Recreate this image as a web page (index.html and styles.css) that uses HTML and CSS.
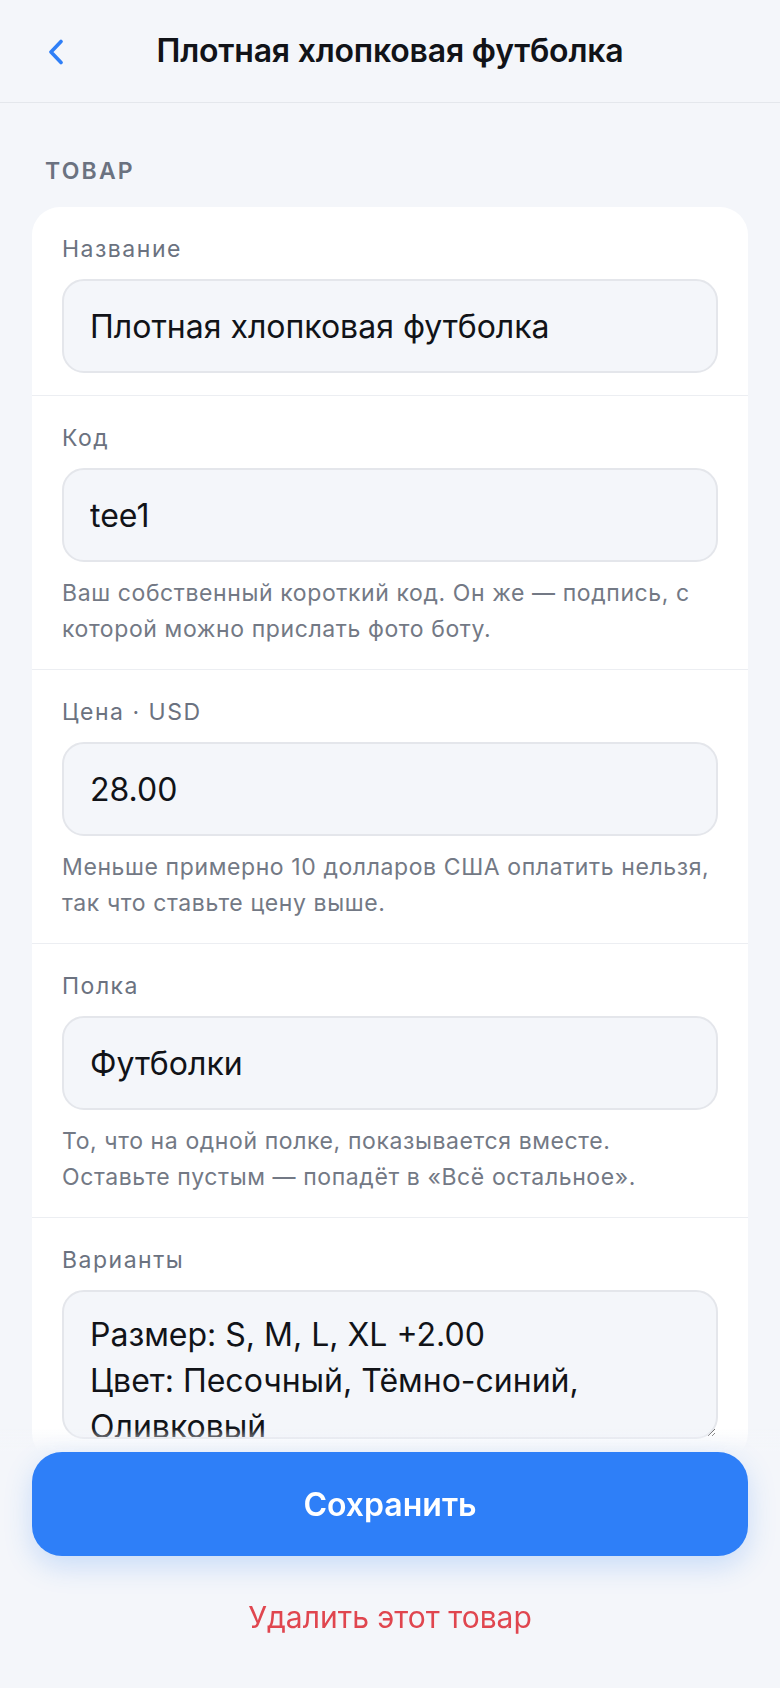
FILE: index.html
```html
<!DOCTYPE html>
<html lang="ru">
<head>
<meta charset="utf-8">
<title>Плотная хлопковая футболка</title>
<link rel="stylesheet" href="styles.css">
</head>
<body>
<header class="topbar">
  <div class="topbar-side">
    <button class="back" aria-label="Назад">
      <svg width="18" height="26" viewBox="0 0 18 26" fill="none"><path d="M14 2.5 L4 13 L14 23.5" stroke="#2f7ff7" stroke-width="3.6" stroke-linecap="round" stroke-linejoin="round"/></svg>
    </button>
  </div>
  <h1 class="title">Плотная хлопковая футболка</h1>
  <div class="topbar-side"></div>
</header>

<main class="content">
  <div class="section-label">ТОВАР</div>
  <section class="card">
    <div class="row">
      <label class="field-label" for="f-name">Название</label>
      <input class="field" id="f-name" type="text" value="Плотная хлопковая футболка">
    </div>
    <div class="row">
      <label class="field-label" for="f-code">Код</label>
      <input class="field" id="f-code" type="text" value="tee1">
      <p class="help">Ваш собственный короткий код. Он же — подпись, с которой можно прислать фото боту.</p>
    </div>
    <div class="row">
      <label class="field-label" for="f-price">Цена · USD</label>
      <input class="field" id="f-price" type="text" value="28.00">
      <p class="help">Меньше примерно 10 долларов США оплатить нельзя, так что ставьте цену выше.</p>
    </div>
    <div class="row">
      <label class="field-label" for="f-shelf">Полка</label>
      <input class="field" id="f-shelf" type="text" value="Футболки">
      <p class="help">То, что на одной полке, показывается вместе. Оставьте пустым — попадёт в «Всё остальное».</p>
    </div>
    <div class="row">
      <label class="field-label" for="f-variants">Варианты</label>
      <textarea class="field area" id="f-variants">Размер: S, M, L, XL +2.00
Цвет: Песочный, Тёмно-синий, Оливковый</textarea>
    </div>
  </section>
</main>

<footer class="actions">
  <button class="save">Сохранить</button>
  <button class="delete">Удалить этот товар</button>
</footer>
</body>
</html>
```

FILE: styles.css
```css
* { box-sizing: border-box; }

html, body {
  margin: 0;
  padding: 0;
  background: #f4f6fa;
  font-family: Inter, "Noto Sans", "Liberation Sans", sans-serif;
  color: #111318;
  overflow: hidden;
}

body {
  height: 1688px;
}

.topbar {
  height: 103px;
  border-bottom: 1px solid #e4e7ec;
  display: grid;
  grid-template-columns: 1fr auto 1fr;
  align-items: center;
}

.topbar-side {
  display: flex;
  align-items: center;
}

.back {
  margin-left: 47px;
  margin-top: 2px;
  padding: 0;
  border: 0;
  background: none;
  display: flex;
  cursor: pointer;
}

.title {
  margin: 0;
  font-size: 32px;
  font-weight: 600;
  line-height: 40px;
  letter-spacing: -0.2px;
  color: #111318;
}

.content {
  padding: 0 32px;
}

.section-label {
  margin: 53px 0 21px 13px;
  font-size: 23px;
  line-height: 30px;
  font-weight: 600;
  letter-spacing: 2.2px;
  color: #6b7280;
}

.card {
  background: #ffffff;
  border-radius: 28px;
  overflow: hidden;
}

.row {
  padding: 26px 30px 22px;
  display: flex;
  flex-direction: column;
}

.row + .row {
  border-top: 1px solid #eceef2;
}

.field-label {
  font-size: 23px;
  line-height: 32px;
  letter-spacing: 1.5px;
  color: #6b7280;
  margin-bottom: 14px;
}

.field {
  width: 100%;
  height: 94px;
  border: 2px solid #e4e6eb;
  border-radius: 22px;
  background: #f4f6fa;
  padding: 0 26px;
  font-family: inherit;
  font-size: 32px;
  line-height: 46px;
  color: #111318;
  outline: none;
}

.area {
  height: 149px;
  padding: 20px 26px;
  resize: vertical;
  display: block;
  overflow: hidden;
}

.help {
  margin: 13px 0 0;
  font-size: 23px;
  line-height: 36px;
  letter-spacing: 0.6px;
  color: #737985;
}

.actions {
  position: fixed;
  left: 0;
  right: 0;
  bottom: 0;
  padding: 24px 32px 51px;
  background: linear-gradient(to bottom, rgba(244, 246, 250, 0), #f4f6fa 24px);
  display: flex;
  flex-direction: column;
  align-items: stretch;
}

.save {
  height: 104px;
  border: 0;
  border-radius: 30px;
  background: #2e7ff8;
  color: #ffffff;
  font-family: inherit;
  font-size: 32px;
  font-weight: 600;
  box-shadow: 0 10px 28px rgba(46, 127, 248, 0.22);
  cursor: pointer;
}

.delete {
  margin-top: 41px;
  border: 0;
  background: none;
  padding: 0;
  height: 40px;
  font-family: inherit;
  font-size: 30px;
  line-height: 40px;
  color: #e0464f;
  cursor: pointer;
}
```
